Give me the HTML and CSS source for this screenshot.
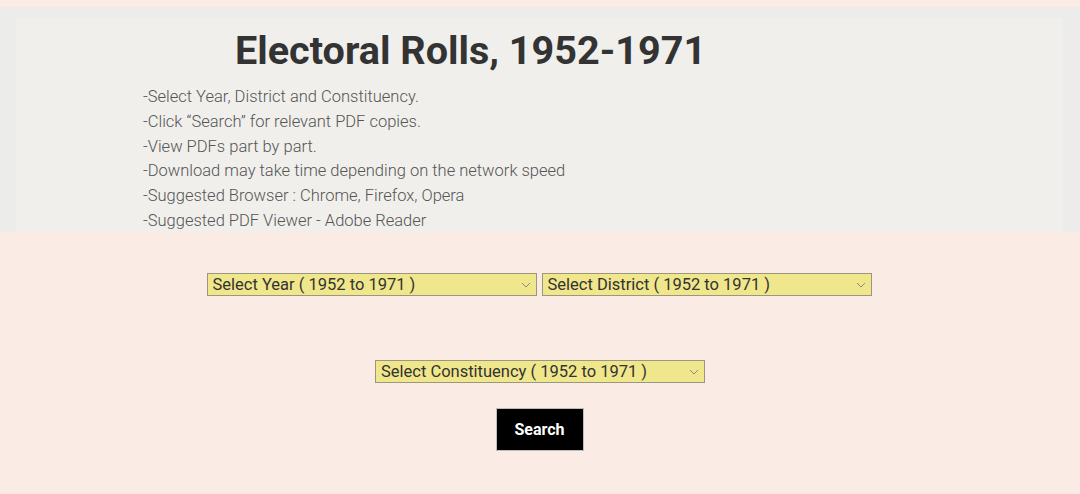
FILE: index.html
```html
<!DOCTYPE html>
<html>
<head>
<meta charset="utf-8">
<link rel="stylesheet" href="styles.css">
</head>
<body>
<div class="band">
  <div class="panel">
    <h1 class="title">Electoral Rolls, 1952-1971</h1>
    <ul class="notes">
      <li>-Select Year, District and Constituency.</li>
      <li>-Click “Search” for relevant PDF copies.</li>
      <li>-View PDFs part by part.</li>
      <li>-Download may take time depending on the network speed</li>
      <li>-Suggested Browser : Chrome, Firefox, Opera</li>
      <li>-Suggested PDF Viewer - Adobe Reader</li>
    </ul>
  </div>
</div>
<form class="form">
  <div class="row row-top">
    <select class="sel"><option>Select Year ( 1952 to 1971 )</option></select>
    <select class="sel"><option>Select District ( 1952 to 1971 )</option></select>
  </div>
  <div class="row row-mid">
    <select class="sel"><option>Select Constituency ( 1952 to 1971 )</option></select>
  </div>
  <div class="row row-btn">
    <button type="button" class="btn">Search</button>
  </div>
</form>
</body>
</html>
```
FILE: styles.css
```css
html, body {
  margin: 0;
  padding: 0;
}
body {
  background: #faece4;
  font-family: Roboto, "Liberation Sans", sans-serif;
  width: 1080px;
  height: 494px;
  overflow: hidden;
}
.band {
  margin-top: 7px;
  background: #ececeb;
  padding: 11px 17px 0 16px;
}
.panel {
  background: #f0efeb;
  height: 214px;
  box-sizing: border-box;
  padding-top: 9px;
}
.title {
  margin: 0 0 0 219px;
  font-size: 39.6px;
  font-weight: 700;
  line-height: 48px;
  color: #333333;
}
.notes {
  list-style: none;
  margin: 10px 0 0 127px;
  padding: 0;
  font-size: 16.5px;
  font-weight: 300;
  color: #555555;
  line-height: 24.8px;
}
.form {
  display: flex;
  flex-direction: column;
  align-items: center;
}
.row {
  display: flex;
  justify-content: center;
  gap: 5px;
}
.row-top {
  margin-top: 41px;
  margin-right: 2px;
}
.row-mid {
  margin-top: 64px;
}
.row-btn {
  margin-top: 25px;
}
.sel {
  -webkit-appearance: none;
  appearance: none;
  width: 330px;
  height: 23px;
  margin: 0;
  padding: 0 20px 0 5px;
  border: 1px solid #9a9780;
  border-radius: 0;
  background-color: #f0e68c;
  background-image: url("data:image/svg+xml;utf8,<svg xmlns='http://www.w3.org/2000/svg' width='10' height='6' viewBox='0 0 10 6'><path d='M1 1 L5 5 L9 1' fill='none' stroke='%23888' stroke-width='1'/></svg>");
  background-repeat: no-repeat;
  background-position: right 5px center;
  font-family: Roboto, "Liberation Sans", sans-serif;
  font-size: 16.5px;
  color: #333333;
  line-height: 21px;
}
.btn {
  width: 88px;
  height: 43px;
  margin-right: 1px;
  background: #000;
  color: #fff;
  border: 1px solid #bcbcbc;
  border-radius: 0;
  font-family: Roboto, "Liberation Sans", sans-serif;
  font-size: 16px;
  font-weight: 700;
  padding: 0;
}
```
